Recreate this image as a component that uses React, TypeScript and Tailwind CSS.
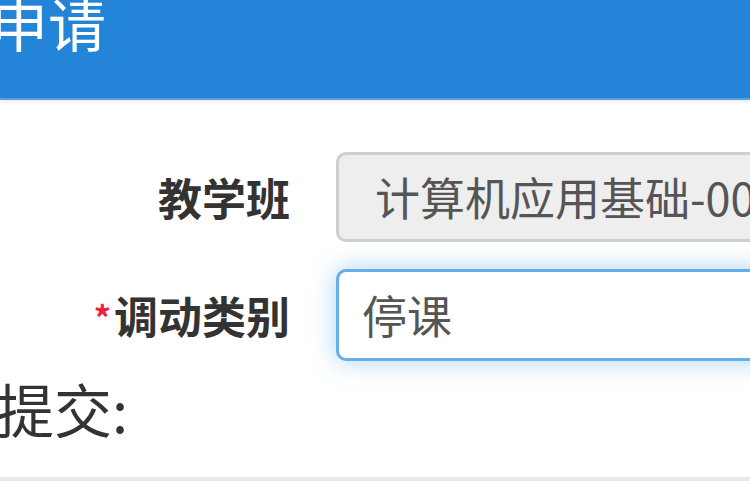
const FONT = "font-['Noto_Sans_CJK_SC','Noto_Sans',sans-serif]";

function Row({
  label,
  required,
  children,
}: {
  label: string;
  required?: boolean;
  children: React.ReactNode;
}) {
  return (
    <div className="flex items-center">
      <label className="w-[290px] shrink-0 text-right text-[44px] leading-none font-bold text-[#333] whitespace-nowrap">
        {required && (
          <span className="mr-[3px] text-[34px] align-[3px] font-bold text-[#f0203a]">*</span>
        )}
        {label}
      </label>
      <div className="ml-[46px] w-[600px] shrink-0">{children}</div>
    </div>
  );
}

export default function App() {
  return (
    <div className={`w-[750px] h-[497px] overflow-hidden bg-white ${FONT}`}>
      <div className="h-[100px] overflow-hidden bg-[#2485d8] border-b-2 border-[#5d9fe0] shadow-[0_2px_4px_rgba(0,0,0,0.08)]">
        <h4 className="ml-[-10px] mt-[-7px] text-[58px] leading-none font-normal text-white whitespace-nowrap">
          申请
        </h4>
      </div>

      <div className="flex flex-col gap-[27px] pt-[52px]">
        <Row label="教学班">
          <div className="h-[90px] flex items-center pl-[36px] rounded-[10px] border-[3px] border-[#cfcfcf] bg-[#eeeeee] text-[45px] text-[#555] whitespace-nowrap">
            计算机应用基础-001
          </div>
        </Row>
        <Row label="调动类别" required>
          <div className="h-[92px] flex items-center pl-[23px] rounded-[10px] border-[3px] border-[#66afe9] bg-white text-[45px] text-[#555] whitespace-nowrap shadow-[0_0_24px_rgba(102,175,233,0.55)]">
            停课
          </div>
        </Row>
      </div>

      <div className="ml-[-4px] mt-[18px] text-[58px] leading-none text-[#333] whitespace-nowrap">
        提交:
      </div>

      <div className="mt-[40px] h-[4px] bg-[#e8e8e8]" />
    </div>
  );
}
